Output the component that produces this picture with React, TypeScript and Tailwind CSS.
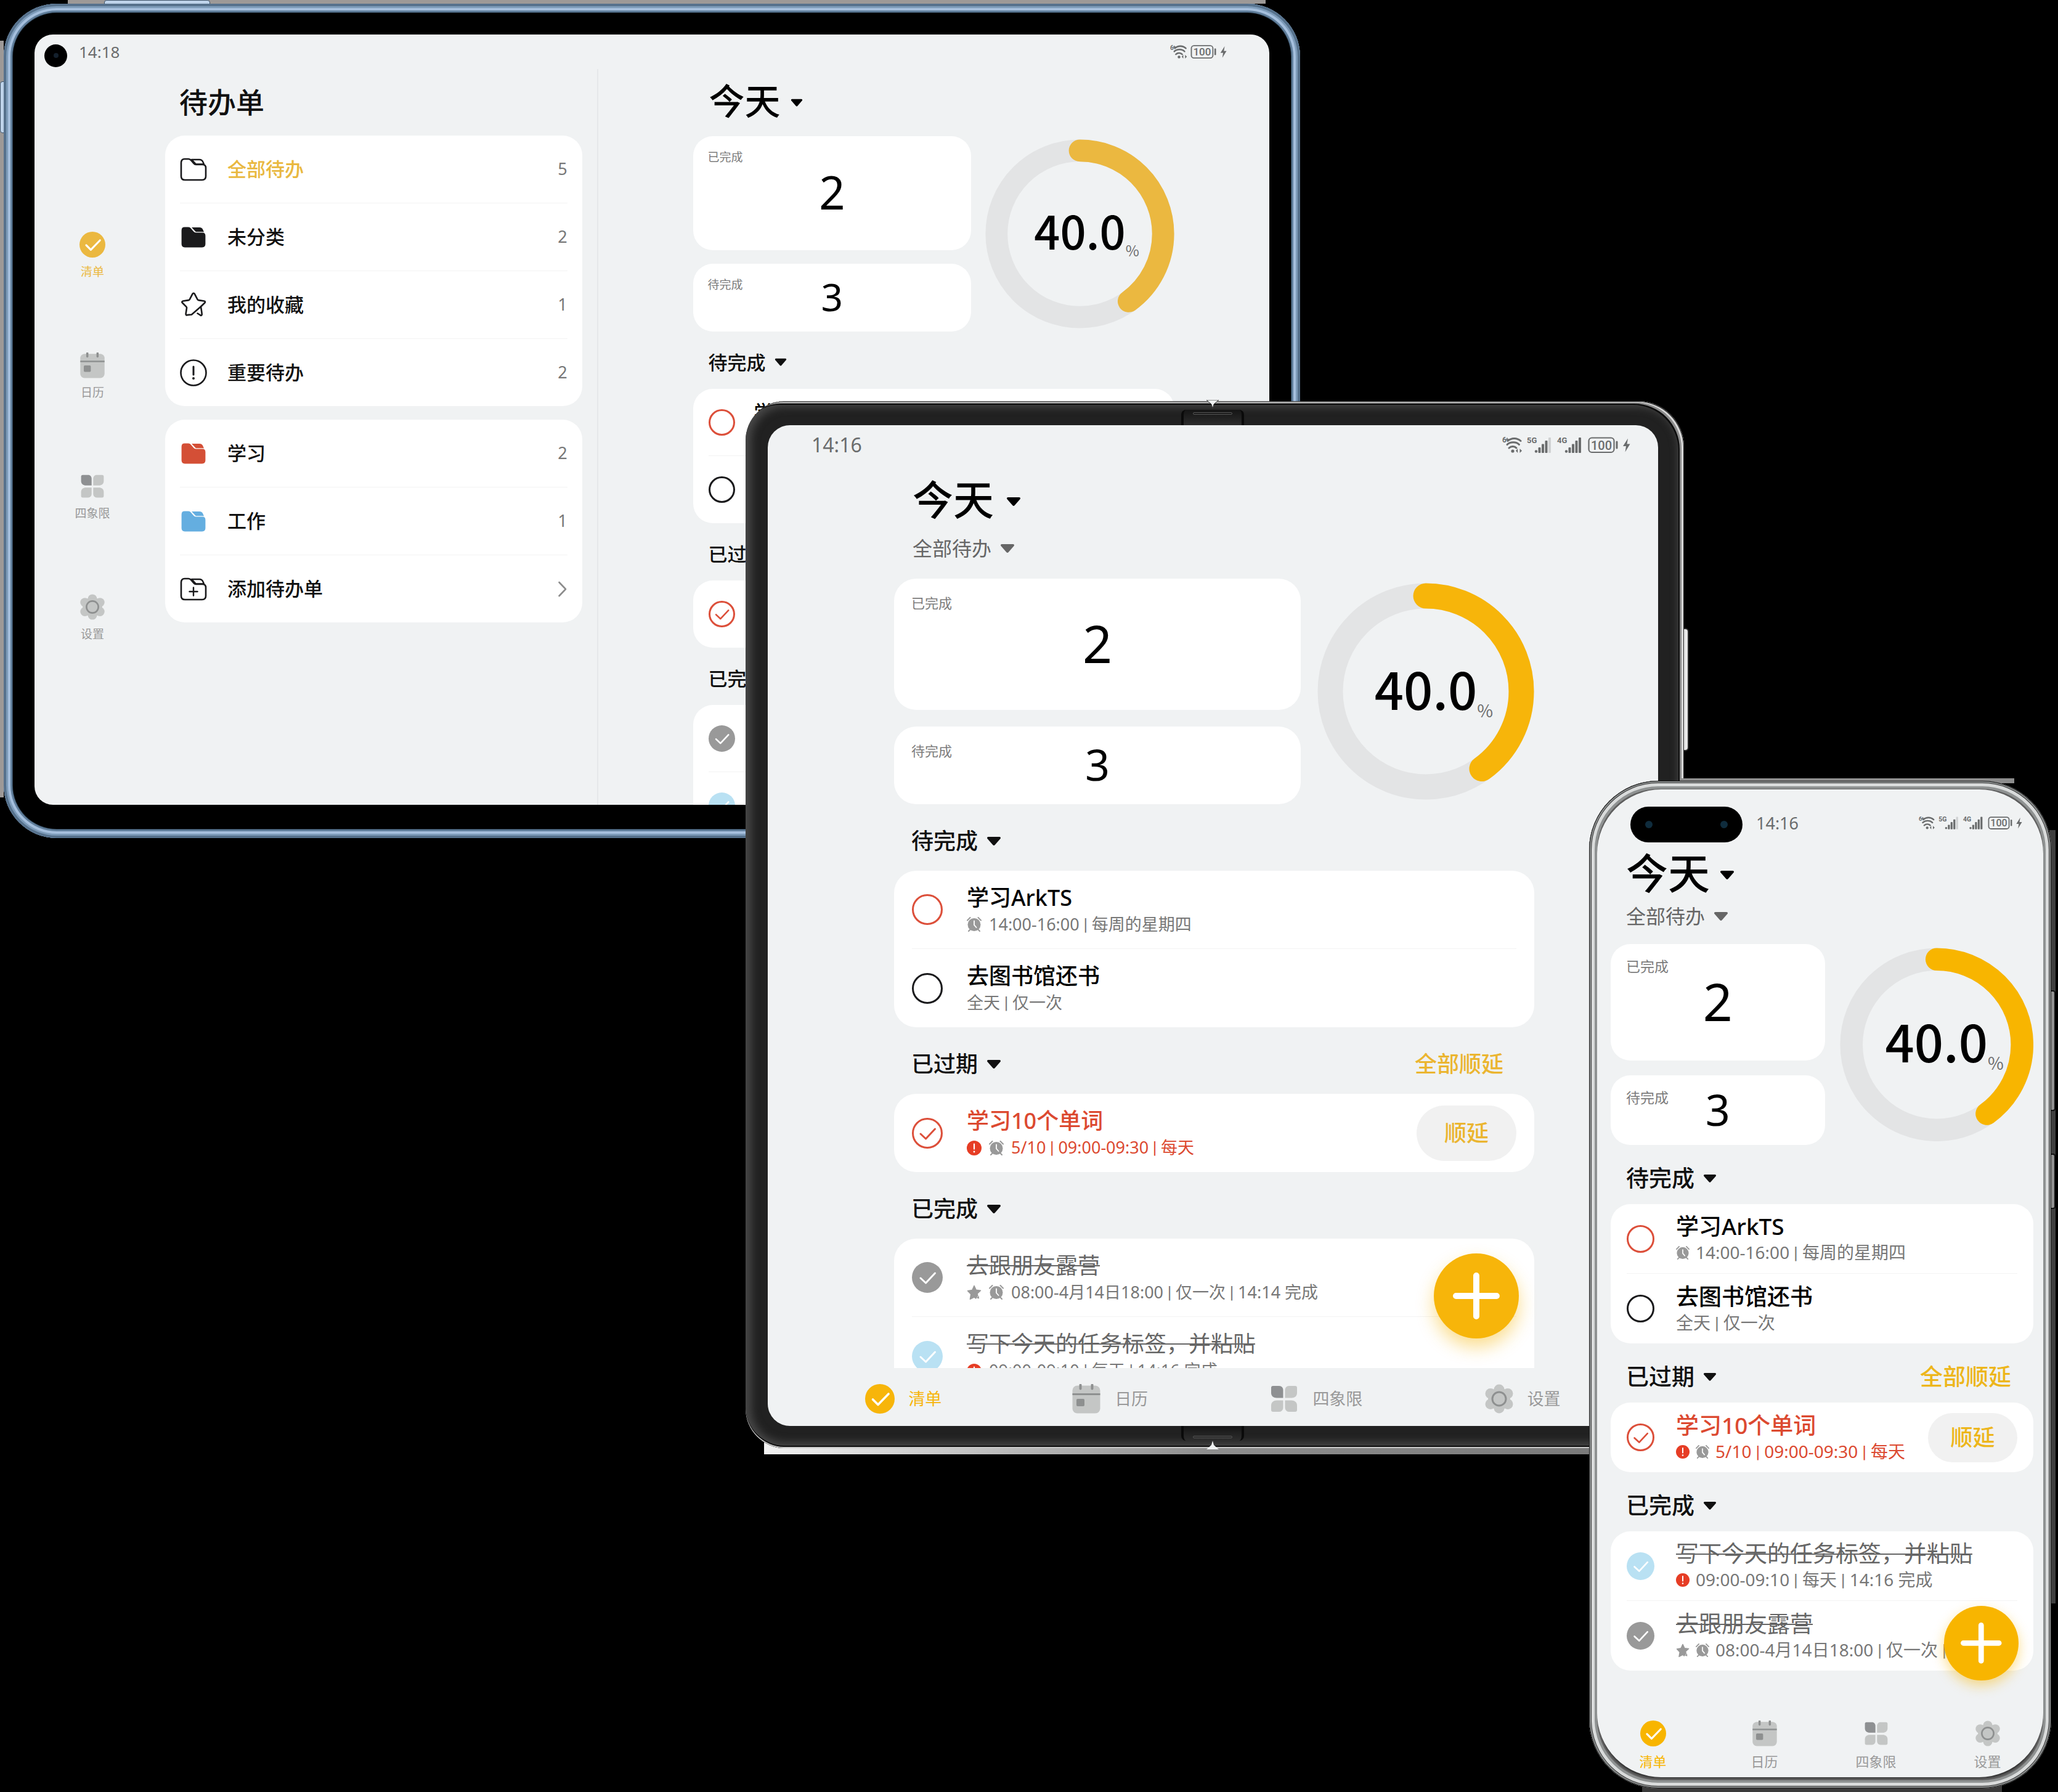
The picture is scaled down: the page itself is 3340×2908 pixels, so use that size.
import { useId, type ReactNode } from "react";

/* ---------- size themes, one per device ---------- */

type Theme = {
  accentText: string;
  accentFill: string;
  danger: string;
  title: string;
  titleCaret: string;
  stats: string;
  statsLeft: string;
  statBig: string;
  statSmall: string;
  statLabel: string;
  bigNumber: string;
  smallNumber: string;
  percent: string;
  percentSign: string;
  header: string;
  headerText: string;
  headerCaret: string;
  postponeAll: string;
  card: string;
  row: string;
  check: string;
  rowTitle: string;
  rowMeta: string;
  metaIcon: string;
  postpone: string;
};

const tablet: Theme = {
  accentText: "text-[#e9b840]",
  accentFill: "text-[#ebb840]",
  danger: "text-[#cf5541]",
  title: "text-[58px] leading-[72px] gap-4",
  titleCaret: "w-5 mt-1.5",
  stats: "grid-cols-[minmax(0,450fr)_minmax(0,306fr)] gap-[23px]",
  statsLeft: "gap-[22px]",
  statBig: "h-[185px]",
  statSmall: "h-[110px]",
  statLabel: "left-6 top-5 text-[19px] leading-7",
  bigNumber: "text-[74px]",
  smallNumber: "text-[62px]",
  percent: "text-[74px]",
  percentSign: "text-[24px]",
  header: "pl-[25px] pr-11 pt-[28px] pb-[21px]",
  headerText: "text-[31px] leading-[44px] gap-3.5",
  headerCaret: "w-5",
  postponeAll: "text-[31px] leading-[44px]",
  card: "rounded-[32px] px-[25px]",
  row: "h-[109px] gap-[31px]",
  check: "size-[43px]",
  rowTitle: "text-[31px] leading-[42px]",
  rowMeta: "text-[23px] leading-[32px] gap-2.5",
  metaIcon: "size-5",
  postpone: "w-[140px] h-[78px] text-[31px]",
};

const foldable: Theme = {
  accentText: "text-[#ebb530]",
  accentFill: "text-[#f7b50a]",
  danger: "text-[#dc4930]",
  title: "text-[66px] leading-[80px] gap-5",
  titleCaret: "w-6 mt-2",
  stats: "grid-cols-[minmax(0,660fr)_minmax(0,352fr)] gap-[27px]",
  statsLeft: "gap-[27px]",
  statBig: "h-[213px]",
  statSmall: "h-[126px]",
  statLabel: "left-7 top-[23px] text-[22px] leading-8",
  bigNumber: "text-[84px]",
  smallNumber: "text-[70px]",
  percent: "text-[83px]",
  percentSign: "text-[28px]",
  header: "pl-7 pr-[50px] pt-9 pb-6",
  headerText: "text-[36px] leading-[48px] gap-3.5",
  headerCaret: "w-6",
  postponeAll: "text-[36px] leading-[48px]",
  card: "rounded-[36px] px-[29px]",
  row: "h-[127px] gap-[39px]",
  check: "size-[50px]",
  rowTitle: "text-[36px] leading-[48px]",
  rowMeta: "text-[27px] leading-[38px] gap-3",
  metaIcon: "size-6",
  postpone: "w-[162px] h-[90px] text-[36px]",
};

const phone: Theme = {
  accentText: "text-[#edb61c]",
  accentFill: "text-[#f8b500]",
  danger: "text-[#dc4930]",
  title: "text-[68px] leading-[80px] gap-4",
  titleCaret: "w-6 mt-1.5",
  stats: "grid-cols-[minmax(0,347fr)_minmax(0,314fr)] gap-6",
  statsLeft: "gap-6",
  statBig: "h-[189px]",
  statSmall: "h-[113px]",
  statLabel: "left-[25px] top-5 text-[23px] leading-8",
  bigNumber: "text-[84px]",
  smallNumber: "text-[70px]",
  percent: "text-[83px]",
  percentSign: "text-[28px]",
  header: "pl-[25px] pr-9 pt-[30px] pb-[18px]",
  headerText: "text-[37px] leading-[48px] gap-3.5",
  headerCaret: "w-[22px]",
  postponeAll: "text-[37px] leading-[48px]",
  card: "rounded-[32px] px-[26px]",
  row: "h-[113px] gap-[35px]",
  check: "size-[45px]",
  rowTitle: "text-[37px] leading-[46px]",
  rowMeta: "text-[28px] leading-[38px] gap-2.5",
  metaIcon: "size-[22px]",
  postpone: "w-[145px] h-[80px] text-[36px]",
};

/* ---------- icons ---------- */

function Caret({ className }: { className: string }) {
  return (
    <svg viewBox="0 0 24 16" className={className} aria-hidden="true">
      <path d="M3 1h18c1.800 0 2.600 1.700 1.500 3l-9 10.300c-.8.9-2.200.9-3 0l-9-10.300C.4 2.700 1.200 1 3 1z" fill="currentColor" />
    </svg>
  );
}

function CheckMark({ className }: { className: string }) {
  return (
    <svg viewBox="0 0 50 50" className={className} aria-hidden="true">
      <path d="M14 26l8.500 8 15-16" fill="none" stroke="currentColor" strokeWidth="3" strokeLinecap="round" strokeLinejoin="round" />
    </svg>
  );
}

function ListIcon({ className }: { className: string }) {
  return (
    <svg viewBox="0 0 48 48" className={className} aria-hidden="true">
      <circle cx="24" cy="24" r="24" fill="currentColor" />
      <path d="M12.500 25l8.500 8.500L38 16" fill="none" stroke="#fff" strokeWidth="3.600" strokeLinecap="round" strokeLinejoin="round" />
    </svg>
  );
}

function CalendarIcon({ className }: { className: string }) {
  return (
    <svg viewBox="0 0 48 48" className={className} aria-hidden="true">
      <rect x="1.500" y="2.500" width="45" height="45" rx="8" fill="#c4c6c5" />
      <path d="M1.500 16.500h45" stroke="#8e9090" strokeWidth="3" />
      <path d="M14.500 1.500v6M33.500 1.500v6" stroke="#8e9090" strokeWidth="4" strokeLinecap="round" />
      <rect x="8" y="24" width="13" height="12" rx="2" fill="#8e9090" />
    </svg>
  );
}

function QuadrantIcon({ className }: { className: string }) {
  return (
    <svg viewBox="0 0 48 48" className={className} aria-hidden="true">
      <path d="M6 3h10c4 0 6.500 3 6.500 7v12.500H12c-5 0-9-3-9-8V6a3 3 0 0 1 3-3z" fill="#8e9092" />
      <path d="M42 3H32c-4 0-6.500 3-6.500 7v12.500H36c5 0 9-3 9-8V6a3 3 0 0 0-3-3z" fill="#c4c6c5" />
      <path d="M6 45h10c4 0 6.500-3 6.500-7V26.500H12c-5 0-9 3-9 8V42a3 3 0 0 0 3 3z" fill="#c4c6c5" />
      <path d="M42 45H32c-4 0-6.500-3-6.500-7V26.500H36c5 0 9 3 9 8V42a3 3 0 0 1-3 3z" fill="#c4c6c5" />
    </svg>
  );
}

function GearIcon({ className }: { className: string }) {
  return (
    <svg viewBox="0 0 48 48" className={className} aria-hidden="true">
      <g fill="#c4c6c5">
        <circle cx="24" cy="24" r="18" />
        <circle cx="24" cy="9" r="8.500" />
        <circle cx="24" cy="39" r="8.500" />
        <circle cx="10" cy="15.500" r="8.500" />
        <circle cx="38" cy="15.500" r="8.500" />
        <circle cx="10" cy="32.500" r="8.500" />
        <circle cx="38" cy="32.500" r="8.500" />
      </g>
      <circle cx="24" cy="24" r="11" fill="none" stroke="#8e9090" strokeWidth="3" />
    </svg>
  );
}

function AlarmIcon({ className }: { className: string }) {
  return (
    <svg viewBox="0 0 24 24" className={className} aria-hidden="true">
      <path d="M1 5.500L5.500 1M23 5.500L18.500 1M3 23l4-4M21 23l-4-4" stroke="#999" strokeWidth="2" strokeLinecap="round" />
      <circle cx="12" cy="12.500" r="10.500" fill="#999" />
      <path d="M12 6.500v6.500l3.500 4" fill="none" stroke="#fff" strokeWidth="1.800" strokeLinecap="round" />
    </svg>
  );
}

function AlertIcon({ className }: { className: string }) {
  return (
    <svg viewBox="0 0 24 24" className={className} aria-hidden="true">
      <circle cx="12" cy="12" r="12" fill="#e63d25" />
      <path d="M12 5.500v8" stroke="#fff" strokeWidth="2.200" strokeLinecap="round" />
      <circle cx="12" cy="18" r="1.400" fill="#fff" />
    </svg>
  );
}

function StarSmallIcon({ className }: { className: string }) {
  return (
    <svg viewBox="0 0 24 24" className={className} aria-hidden="true">
      <path
        d="M12 1.500l3.200 6.800 7.300.9-5.400 5 .6 3.200-3.200 4.600L12 20l-6.600 3.300 1.400-8.100-5.300-5.500 7.300-1.200z"
        fill="#999"
        stroke="#999"
        strokeWidth="1.500"
        strokeLinejoin="round"
      />
      <path d="M16 21.500l3.500-4 .6 5z" fill="#999" />
    </svg>
  );
}

function FolderIcon({ fill, outline, plus }: { fill?: string; outline?: boolean; plus?: boolean }) {
  return (
    <svg viewBox="0 0 44 44" className="size-11 shrink-0" aria-hidden="true">
      <path d="M19 6h12.500c3 0 5 1.500 6 4l1.500 3.500H26z" fill={outline ? "none" : fill} stroke={outline ? "#1a1a1c" : "none"} strokeWidth="2.400" strokeLinejoin="round" />
      <path
        d="M2 11c0-3.500 2-6 5.500-6H14c2 0 3 .7 4.200 2.200l4.300 5c1 1.200 1.800 1.800 3.500 1.800h10.500c3.500 0 5.500 2 5.500 5.500V33c0 4-2 6-6 6H8c-4 0-6-2-6-6z"
        fill={outline ? "#fff" : fill}
        stroke={outline ? "#1a1a1c" : "#fff"}
        strokeWidth={outline ? 2.600 : 1.200}
        strokeLinejoin="round"
      />
      {plus && <path d="M22 19.500v13M15.500 26h13" stroke="#1a1a1c" strokeWidth="2.400" strokeLinecap="round" />}
    </svg>
  );
}

function StarIcon() {
  return (
    <svg viewBox="0 0 44 44" className="size-11 shrink-0" aria-hidden="true" fill="none" stroke="#1a1a1c" strokeWidth="2.600" strokeLinejoin="round" strokeLinecap="round">
      <path d="M34 24.500l6.200-6c1.300-1.300.8-2.800-1-3l-9-1.400c-.8-.1-1.300-.5-1.700-1.200l-4.700-9c-.8-1.600-2.500-1.600-3.300 0l-4.700 9c-.4.700-.9 1.100-1.700 1.200l-9 1.400c-1.800.3-2.300 1.800-1 3l6.300 6.300c.6.600.7 1.200.6 2l-1.400 9.500c-.3 1.700 1 2.600 2.500 1.800L19 37.500z" />
      <path d="M34 24.500c.5 4 1.400 8 1.700 12.300.1 1.800-1 2.500-2.500 1.700l-4.700-3" />
    </svg>
  );
}

function ImportantIcon() {
  return (
    <svg viewBox="0 0 44 44" className="size-11 shrink-0" aria-hidden="true">
      <circle cx="22" cy="22" r="20.500" fill="none" stroke="#1a1a1c" strokeWidth="2.600" />
      <path d="M22 12v13" stroke="#1a1a1c" strokeWidth="3" strokeLinecap="round" />
      <circle cx="22" cy="31" r="2" fill="#1a1a1c" />
    </svg>
  );
}

function WifiGlyph() {
  return (
    <g fill="none" stroke="#6a6c6d" strokeLinecap="round">
      <text x="0" y="10" fontSize="12" fontWeight="700" fontFamily="Roboto" fill="#6a6c6d" stroke="none">6</text>
      <path d="M8 3v4M6.500 5h4" strokeWidth="1.500" />
      <path d="M9 7.500c6-5.500 15-5.500 21 0" strokeWidth="3" />
      <path d="M8 13.500c5-5 15-5 19.500 0" strokeWidth="3" />
      <path d="M11 19c3.500-3.300 9-3.300 12 0" strokeWidth="3" />
      <circle cx="17" cy="24" r="2.600" fill="#6a6c6d" stroke="none" />
      <path d="M22 23.500l3.200-3.500v7zM32 23.500L28.500 20v7z" fill="#6a6c6d" stroke="none" />
    </g>
  );
}

function SignalGlyph({ x, label, weak }: { x: number; label: string; weak?: boolean }) {
  return (
    <g transform={`translate(${x} 0)`} fill="#6a6c6d">
      <text x="0" y="11" fontSize="13" fontWeight="700" fontFamily="Roboto">{label}</text>
      <circle cx="15" cy="24.500" r="2.200" />
      <rect x="18.500" y="18" width="4" height="9" rx="1" />
      <rect x="24" y="12.500" width="4" height="14.500" rx="1" />
      <rect x="29.500" y="7" width="4" height="20" rx="1" />
      <rect x="35" y="2" width="4" height="25" rx="1" fill={weak ? "#cfd1d2" : "#6a6c6d"} />
    </g>
  );
}

function BatteryGlyph({ x }: { x: number }) {
  return (
    <g transform={`translate(${x} 0)`}>
      <rect x="1.500" y="2.500" width="41" height="23.500" rx="5" fill="none" stroke="#6a6c6d" strokeWidth="2.200" />
      <text x="22" y="21.500" fontSize="20" fontWeight="500" fontFamily="Roboto" textAnchor="middle" fill="#6a6c6d">100</text>
      <path d="M47 9v10" stroke="#6a6c6d" strokeWidth="3" strokeLinecap="round" />
      <path d="M65 3.500L57 16h5l-1.500 9.500L68.500 12.500h-5z" fill="#6a6c6d" />
    </g>
  );
}

function StatusIcons({ className }: { className: string }) {
  return (
    <svg viewBox="0 0 208 29" className={className} role="img" aria-label="状态">
      <WifiGlyph />
      <SignalGlyph x={40} label="5G" weak />
      <SignalGlyph x={89} label="4G" />
      <BatteryGlyph x={139} />
    </svg>
  );
}

function StatusIconsCompact({ className }: { className: string }) {
  return (
    <svg viewBox="0 0 108 29" className={className} role="img" aria-label="状态">
      <WifiGlyph />
      <BatteryGlyph x={39} />
    </svg>
  );
}

/* ---------- shared pieces ---------- */

function Stat({ t, label, value, big }: { t: Theme; label: string; value: string; big?: boolean }) {
  return (
    <div className={`relative flex items-center justify-center bg-white pb-1 ${t.card} ${big ? t.statBig : t.statSmall}`}>
      <span className={`absolute text-[#7c7c7c] ${t.statLabel}`}>{label}</span>
      <span className={`leading-none text-black ${big ? t.bigNumber : t.smallNumber}`}>{value}</span>
    </div>
  );
}

function Ring({ t }: { t: Theme }) {
  const circumference = 2 * Math.PI * 155;
  return (
    <div className="grid place-items-center self-center">
      <svg viewBox="0 0 352 352" className={`col-start-1 row-start-1 w-full ${t.accentFill}`} aria-hidden="true">
        <circle cx="176" cy="176" r="155" fill="none" stroke="#e3e4e5" strokeWidth="41" />
        <circle
          cx="176"
          cy="176"
          r="155"
          fill="none"
          stroke="currentColor"
          strokeWidth="41"
          strokeLinecap="round"
          strokeDasharray={`${circumference * 0.4} ${circumference}`}
          transform="rotate(-90 176 176)"
        />
      </svg>
      <span className={`relative col-start-1 row-start-1 pb-3 font-['Noto_Sans_CJK_SC'] leading-none font-medium text-black ${t.percent}`}>
        40.0
        <span className={`absolute bottom-1 left-full font-normal leading-none text-[#6e6e6e] ${t.percentSign}`}>%</span>
      </span>
    </div>
  );
}

function Stats({ t }: { t: Theme }) {
  return (
    <div className={`grid ${t.stats}`}>
      <div className={`flex flex-col ${t.statsLeft}`}>
        <Stat t={t} label="已完成" value="2" big />
        <Stat t={t} label="待完成" value="3" />
      </div>
      <Ring t={t} />
    </div>
  );
}

function SectionHeader({ t, title, action }: { t: Theme; title: string; action?: string }) {
  return (
    <div className={`flex items-center justify-between ${t.header}`}>
      <button type="button" className={`flex items-center font-medium text-[#111] ${t.headerText}`}>
        {title}
        <Caret className={t.headerCaret} />
      </button>
      {action && (
        <button type="button" className={`font-medium ${t.accentText} ${t.postponeAll}`}>
          {action}
        </button>
      )}
    </div>
  );
}

type Task = {
  title: string;
  meta: string[];
  icons: ("star" | "alert" | "alarm")[];
  ring: "red" | "black" | "redCheck" | "gray" | "blue";
  done?: boolean;
  overdue?: boolean;
};

const ringStyles = {
  red: "border-3 border-[#dc4f3a]",
  black: "border-3 border-[#1a1a1c]",
  redCheck: "border-3 border-[#dc4f3a]",
  gray: "bg-[#999999]",
  blue: "bg-[#b9e1f3]",
};

function TaskRow({ t, task }: { t: Theme; task: Task }) {
  const id = useId();
  const checked = task.ring !== "red" && task.ring !== "black";
  return (
    <li className={`flex items-center border-b border-[#f3f3f3] last:border-b-0 ${t.row}`}>
      <span className={`relative shrink-0 ${t.check}`}>
        <input id={id} type="checkbox" defaultChecked={checked} className={`block size-full appearance-none rounded-full ${ringStyles[task.ring]}`} />
        {checked && <CheckMark className={`pointer-events-none absolute inset-0 size-full ${task.overdue ? "text-[#dc4f3a]" : "text-white"}`} />}
      </span>
      <div className="min-w-0 flex-1">
        <label
          htmlFor={id}
          className={`block w-fit whitespace-nowrap ${t.rowTitle} ${
            task.done ? "text-[#666] line-through decoration-2" : task.overdue ? `font-medium ${t.danger}` : "font-medium text-black"
          }`}
        >
          {task.title}
        </label>
        <p className={`flex items-center ${t.rowMeta} ${task.overdue ? t.danger : "text-[#777]"}`}>
          {task.icons.map((icon) =>
            icon === "star" ? (
              <StarSmallIcon key={icon} className={`shrink-0 ${t.metaIcon}`} />
            ) : icon === "alert" ? (
              <AlertIcon key={icon} className={`shrink-0 ${t.metaIcon}`} />
            ) : (
              <AlarmIcon key={icon} className={`shrink-0 ${t.metaIcon}`} />
            ),
          )}
          <span className="min-w-0 truncate">
            {task.meta.map((part, i) => (
              <span key={part}>
                {i > 0 && <span className="font-['Roboto']"> | </span>}
                {part}
              </span>
            ))}
          </span>
        </p>
      </div>
      {task.overdue && (
        <button type="button" className={`shrink-0 rounded-full bg-[#f1f1f1] font-medium ${t.accentText} ${t.postpone}`}>
          顺延
        </button>
      )}
    </li>
  );
}

function TaskCard({ t, tasks }: { t: Theme; tasks: Task[] }) {
  return (
    <ul className={`bg-white ${t.card}`}>
      {tasks.map((task) => (
        <TaskRow key={task.title} t={t} task={task} />
      ))}
    </ul>
  );
}

const pending: Task[] = [
  { title: "学习ArkTS", meta: ["14:00-16:00", "每周的星期四"], icons: ["alarm"], ring: "red" },
  { title: "去图书馆还书", meta: ["全天", "仅一次"], icons: [], ring: "black" },
];
const overdue: Task[] = [
  { title: "学习10个单词", meta: ["5/10", "09:00-09:30", "每天"], icons: ["alert", "alarm"], ring: "redCheck", overdue: true },
];
const camping: Task = { title: "去跟朋友露营", meta: ["08:00-4月14日18:00", "仅一次", "14:14 完成"], icons: ["star", "alarm"], ring: "gray", done: true };
const labels: Task = { title: "写下今天的任务标签，并粘贴", meta: ["09:00-09:10", "每天", "14:16 完成"], icons: ["alert"], ring: "blue", done: true };

function Board({ t, done }: { t: Theme; done: Task[] }) {
  return (
    <>
      <Stats t={t} />
      <SectionHeader t={t} title="待完成" />
      <TaskCard t={t} tasks={pending} />
      <SectionHeader t={t} title="已过期" action="全部顺延" />
      <TaskCard t={t} tasks={overdue} />
      <SectionHeader t={t} title="已完成" />
      <TaskCard t={t} tasks={done} />
    </>
  );
}

function PageTitle({ t }: { t: Theme }) {
  return (
    <h1>
      <button type="button" className={`flex items-center font-medium text-black ${t.title}`}>
        今天
        <Caret className={t.titleCaret} />
      </button>
    </h1>
  );
}

function ListPicker() {
  return (
    <button type="button" className="flex items-center gap-3.5 text-[32px] leading-10 text-[#666]">
      全部待办
      <Caret className="w-6" />
    </button>
  );
}

const navItems = [
  { label: "清单", Icon: ListIcon, active: true },
  { label: "日历", Icon: CalendarIcon, active: false },
  { label: "四象限", Icon: QuadrantIcon, active: false },
  { label: "设置", Icon: GearIcon, active: false },
];

function Nav({ t, className, item, icon }: { t: Theme; className: string; item: string; icon: string }) {
  return (
    <nav className={className}>
      {navItems.map(({ label, Icon, active }) => (
        <a key={label} href="#" className={`flex items-center justify-center whitespace-nowrap ${item} ${active ? t.accentFill : "text-[#999]"}`}>
          <Icon className={`shrink-0 ${icon}`} />
          {label}
        </a>
      ))}
    </nav>
  );
}

function AddButton({ className }: { className: string }) {
  return (
    <button type="button" aria-label="添加" className={`absolute grid place-items-center rounded-full text-white ${className}`}>
      <svg viewBox="0 0 76 76" className="w-[55%]" aria-hidden="true">
        <path d="M38 5v66M5 38h66" stroke="currentColor" strokeWidth="10" strokeLinecap="round" />
      </svg>
    </button>
  );
}

/* ---------- tablet ---------- */

function FolderRow({ icon, label, count, active }: { icon: ReactNode; label: string; count?: string; active?: boolean }) {
  return (
    <li className="border-b border-[#f3f3f3] last:border-b-0">
      <button type="button" className="flex h-[109px] w-full items-center gap-[33px] text-left">
        {icon}
        <span className={`flex-1 text-[31px] font-medium ${active ? "text-[#e9b840]" : "text-[#111]"}`}>{label}</span>
        {count ? (
          <span className="text-[27px] text-[#777]">{count}</span>
        ) : (
          <svg viewBox="0 0 16 28" className="h-7 w-4" aria-hidden="true">
            <path d="M2.500 3l10.500 11L2.500 25" fill="none" stroke="#8c8c8c" strokeWidth="2.600" strokeLinecap="round" strokeLinejoin="round" />
          </svg>
        )}
      </button>
    </li>
  );
}

function Tablet() {
  return (
    <section className="relative col-start-2 col-end-4 row-start-2 row-end-5 min-h-0 min-w-0">
      <div className="absolute -left-1.5 -top-1.5 h-1.5 w-full">
        <div className="ml-[110px] mr-[50px] h-full bg-[#9d9997]" />
      </div>
      <div className="absolute -left-1.5 bottom-[66px] top-[60px] w-1.5 bg-[#9d9997]" />
      <div className="absolute -top-1.5 left-[163px] h-2 w-[172px] rounded-t-sm border border-[#3d5166] bg-[#bed3ea]" />
      <div className="absolute -left-1.5 top-[126px] h-[84px] w-2 rounded-l-sm border border-[#3d5166] bg-[#bed3ea]" />
      <div className="relative flex h-full rounded-[86px] bg-black px-[50px] pb-[54px] pt-[50px] shadow-[inset_0_0_0_4px_#56718c,inset_0_0_0_7px_#7d9bb9,inset_0_0_0_11px_#a5bfdd,inset_0_0_0_14px_#607e9b,inset_0_0_0_15px_#233342]">
        <div className="flex min-w-0 flex-1 flex-col overflow-hidden rounded-[30px] bg-[#f0f2f3]">
          <div className="flex h-14 shrink-0 items-center gap-[19px] pl-4 pr-[69px] text-[26px] text-[#6a6c6d]">
            <span className="mt-3 grid size-[37px] place-items-center rounded-full bg-black">
              <span className="size-2 rounded-full bg-[#14202c]" />
            </span>
            <span className="flex-1">14:18</span>
            <StatusIconsCompact className="w-[92px]" />
          </div>
          <div className="grid min-h-0 flex-1 grid-cols-[188px_minmax(0,725fr)_minmax(0,1087fr)]">
            <Nav
              t={tablet}
              className="flex flex-col gap-[118px] pt-[264px]"
              item="flex-col gap-2.5 text-[19px] leading-[26px]"
              icon="size-[42px]"
            />
            <div className="border-r-2 border-[#e6e8ea] px-6 pt-[23px]">
              <h2 className="pl-[23px] text-[46px] font-medium leading-[60px] text-[#111]">待办单</h2>
              <ul className="mt-[25px] rounded-[32px] bg-white px-6">
                <FolderRow icon={<FolderIcon outline />} label="全部待办" count="5" active />
                <FolderRow icon={<FolderIcon fill="#1a1a1c" />} label="未分类" count="2" />
                <FolderRow icon={<StarIcon />} label="我的收藏" count="1" />
                <FolderRow icon={<ImportantIcon />} label="重要待办" count="2" />
              </ul>
              <ul className="mt-[22px] rounded-[32px] bg-white px-6">
                <FolderRow icon={<FolderIcon fill="#d44f36" />} label="学习" count="2" />
                <FolderRow icon={<FolderIcon fill="#64aee0" />} label="工作" count="1" />
                <FolderRow icon={<FolderIcon outline plus />} label="添加待办单" />
              </ul>
            </div>
            <div className="px-[154px] pt-4">
              <div className="mb-[21px] pl-[26px]">
                <PageTitle t={tablet} />
              </div>
              <Board t={tablet} done={[camping, labels]} />
            </div>
          </div>
        </div>
      </div>
    </section>
  );
}

/* ---------- foldable ---------- */

function Foldable() {
  return (
    <section className="relative col-start-3 col-end-6 row-start-3 row-end-6 min-h-0 min-w-0">
      <div className="absolute -bottom-2.5 left-[30px] right-[60px] h-6 bg-linear-to-r from-[#f2f2f2] via-[#8f8f8f] to-[#777]" />
      <div className="absolute -right-2 top-[368px] h-[200px] w-2.5 rounded-r-md border-2 border-[#2a2a2a] bg-[#e8e8e8]" />
      <div className="relative flex h-full rounded-l-[64px] rounded-r-[74px] bg-[#212121] pb-9 pl-9 pr-[42px] pt-[39px] shadow-[inset_-1px_1px_0_0_#222,inset_-4px_2px_0_0_#d8d8d8,inset_-7px_4px_0_0_#8c8c8c,inset_-9px_6px_0_0_#0c0c0c,inset_0_-2px_0_0_#c8c8c8,inset_0_-4px_0_0_#0c0c0c,inset_0_0_14px_9px_#484848]">
        <div className="absolute left-1/2 top-3.5 h-[26px] w-[102px] -translate-x-[55px] rounded-t-lg border-x-4 border-[#0a0a0a] bg-linear-to-b from-[#151515] to-[#2e2e2e]">
          <div className="mx-auto mt-1 h-1 w-16 rounded-full border border-[#555]" />
        </div>
        <div className="absolute bottom-3 left-1/2 flex h-6 w-[102px] -translate-x-[55px] flex-col justify-end rounded-b-lg border-x-4 border-[#0a0a0a] bg-linear-to-b from-[#151515] to-[#2e2e2e]">
          <div className="mx-auto mb-1 h-1 w-16 rounded-full border border-[#555]" />
        </div>
        <svg viewBox="0 0 24 14" className="absolute -top-0.5 left-1/2 w-6 -translate-x-4" aria-hidden="true">
          <path d="M2 0h20l-8 7-2 7-2-7z" fill="#f0f2f3" stroke="#333" strokeWidth="1" />
        </svg>
        <svg viewBox="0 0 24 14" className="absolute -bottom-0.5 left-1/2 w-6 -translate-x-4" aria-hidden="true">
          <path d="M2 14h20l-8-7-2-7-2 7z" fill="#f0f2f3" />
        </svg>
        <div className="relative flex min-w-0 flex-1 flex-col overflow-hidden rounded-[36px] bg-[#f0f2f3]">
          <div className="flex h-16 shrink-0 items-center justify-between pl-[71px] pr-[45px] text-[32px] text-[#6a6c6d]">
            <span>14:16</span>
            <StatusIcons className="w-[208px]" />
          </div>
          <div className="min-h-0 flex-1 overflow-hidden pl-[205px] pr-[201px]">
            <div className="mb-[29px] mt-4 flex flex-col items-start gap-5 pl-[30px]">
              <PageTitle t={foldable} />
              <ListPicker />
            </div>
            <Board t={foldable} done={[camping, labels]} />
          </div>
          <Nav t={foldable} className="grid h-[94px] shrink-0 grid-cols-4 px-[53px] pt-1.5 text-[27px]" item="gap-[22px]" icon="size-12" />
          <AddButton className="bottom-[142px] right-[226px] size-[138px] bg-[#f7b50a] shadow-[0_14px_28px_rgba(247,181,10,0.45)]" />
        </div>
      </div>
    </section>
  );
}

/* ---------- phone ---------- */

function Phone() {
  return (
    <section className="relative col-start-5 col-end-7 row-start-4 row-end-7 min-h-0 min-w-0">
      <div className="absolute -top-1 left-[150px] right-[60px] h-2 bg-[#8d8d8d]" />
      <div className="absolute -bottom-1.5 left-[86px] right-[80px] h-3 bg-[#3a3a3a]" />
      <div className="absolute -right-[7px] bottom-[300px] top-[80px] w-2.5 bg-[#3f3f3f]" />
      <div className="absolute -right-[7px] top-[340px] h-[196px] w-2.5 rounded-r border-2 border-[#111] bg-[#8f8f8f]" />
      <div className="absolute -right-[7px] top-[605px] h-[90px] w-2.5 rounded-r border-2 border-[#111] bg-[#8f8f8f]" />
      <div className="relative flex h-full rounded-[112px] bg-black px-[13px] pb-[18px] pt-[14px] shadow-[inset_0_0_0_1px_#1c1c1c,inset_0_0_0_3px_#8f9292,inset_0_0_0_4px_#3a3a3a,inset_0_0_0_9px_#d9dbdb,inset_0_0_0_13px_#8f9292,inset_0_0_6px_18px_#6d6d6d]">
        <div className="relative flex min-w-0 flex-1 flex-col overflow-hidden rounded-[104px] bg-[#f0f2f3]">
          <div className="mt-7 flex h-[58px] shrink-0 items-center gap-[22px] pl-[54px] pr-[34px] text-[27px] leading-[54px] text-[#6a6c6d]">
            <div className="flex h-[58px] w-[182px] items-center justify-between rounded-full bg-black px-6">
              <span className="size-3 rounded-full bg-[#0f2c3d]" />
              <span className="size-3 rounded-full bg-[#0f2c3d]" />
            </div>
            <span className="flex-1 pb-1">14:16</span>
            <StatusIcons className="mb-1 w-[168px]" />
          </div>
          <div className="min-h-0 flex-1 overflow-hidden pl-[22px] pr-4">
            <div className="mb-[25px] mt-2.5 flex flex-col items-start gap-2.5 pl-[25px]">
              <PageTitle t={phone} />
              <ListPicker />
            </div>
            <Board t={phone} done={[labels, camping]} />
          </div>
          <Nav t={phone} className="grid shrink-0 grid-cols-4 pb-3" item="flex-col gap-2.5 text-[22px] leading-7" icon="size-[42px]" />
          <AddButton className="bottom-[157px] right-10 size-[121px] bg-[#f8b500] shadow-[0_8px_20px_rgba(248,181,0,0.45)]" />
        </div>
      </div>
    </section>
  );
}

export default function App() {
  return (
    <main
      lang="zh-CN"
      className="grid h-screen w-full grid-cols-[6fr_1204fr_900fr_469fr_154fr_596fr_11fr] grid-rows-[6fr_645fr_616fr_93fr_990fr_552fr_6fr] overflow-hidden bg-black font-['Noto_Sans','Noto_Sans_CJK_SC',sans-serif]"
    >
      <Tablet />
      <Foldable />
      <Phone />
    </main>
  );
}
